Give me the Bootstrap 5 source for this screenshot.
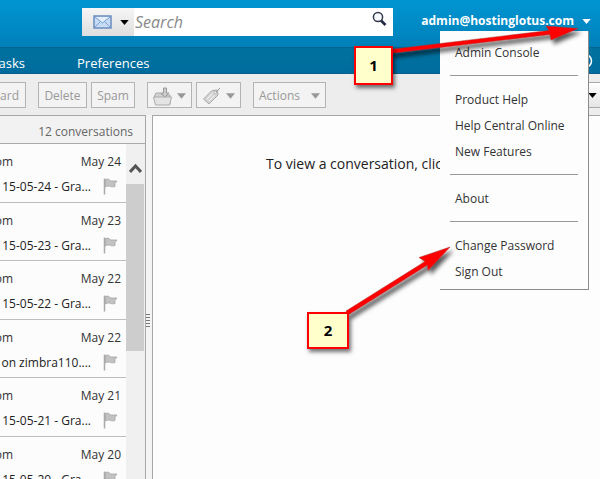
<!DOCTYPE html>
<html lang="en">
<head>
<meta charset="utf-8">
<meta name="viewport" content="width=device-width, initial-scale=1">
<title>Mail</title>
<link href="https://cdn.jsdelivr.net/npm/bootstrap@5.3.0/dist/css/bootstrap.min.css" rel="stylesheet">
<style>
body{font-family:"Open Sans","Noto Sans",sans-serif;font-size:12px;line-height:18px;color:#333;background:#ededed}
.topbar{height:47px;background:linear-gradient(#0095d3,#0080b8);padding:8px 8px 11px 82px}
.searchbox{width:311px;height:28px;background:#fff}
.search-type{width:52px;flex:none;padding:0 5px 0 11px;border:0;background:linear-gradient(#f6f6f6,#dedede)}
.search-text{border:0;border-radius:0;padding:0 1px 1px;font-size:16px;font-style:italic;background:#fff;color:#333;min-width:0}
.search-text::placeholder{color:#888}
.search-go{border:0;background:none;padding:0 6px 6px 4px}
.account{font-weight:700;font-size:12px;color:#fff;border:0;background:none;padding:0 1px 2px 0}
.tabs{height:27px;background:linear-gradient(#00729f,#006c9e);border-top:1px solid #006591;border-bottom:1px solid #0a5f88;padding-right:7px}
.tabs a{color:#fff;font-size:13px;text-decoration:none;line-height:30px}
.tab-cut{width:25px}
.tab-next{margin-left:52px}
.tools{height:41px;background:#ededed;padding-top:8px}
.tool{height:26px;border:1px solid #b4b4b4;border-radius:0;background:#f3f3f3;color:#999;font-size:12px;line-height:24px;padding:2px 0 0;white-space:nowrap;display:flex;align-items:center;justify-content:center}
.tool-cut{width:26px;border-left:0;overflow:hidden;justify-content:flex-end;padding-right:6px}
.w-delete{width:49px}
.w-spam{width:44px}
.w-icon{width:45px;gap:5px}
.w-actions{width:73px;gap:11px}
.gap-s{margin-left:4px}
.gap-l{margin-left:12px}
.tool-view{width:20px;height:26px;border:1px solid #aaa;border-right:0;background:linear-gradient(#fff,#e4e4e4);padding:0 3px 0 0;text-align:right;line-height:10px}
.pane-list{width:146px;border:1px solid #a6a6a6;border-width:1px 1px 0 0;background:#fcfcfc}
.list-top{height:28px;background:#f2f2f2;border-bottom:1px solid #aaa;color:#666;text-align:right;padding:7px 12px 0 0}
.mails{background:#fcfcfc}
.mail{height:59px;border-bottom:1px solid #bdbdbd;padding:9px 5px 0 0}
.mail:nth-child(even){height:58px}
.cut{overflow:hidden;display:flex;justify-content:flex-end;white-space:nowrap}
.cut-from{width:13px}
.cut-subject{width:91px;color:#222}
.mail-line{height:25px}
.scroller{width:19px;background:#f0f0f0}
.scroll-up{height:40px;border:0;background:none;padding:7px 0 0}
.thumb{height:167px;width:18px;background:#cdcdcd}
.grip-bar{width:6px;background:#f4f4f4}
.pane-read{border:1px solid #a6a6a6;border-width:1px 0 0 1px;background:#fdfdfd;padding:38px 0 0 113px;font-size:14px;line-height:20px;color:#222;white-space:nowrap;overflow:hidden;min-width:0}
.dropdown-menu.account-menu{--bs-dropdown-min-width:149px;width:149px;position:absolute;top:31px;right:11px;border:1px solid #8c8c8c;border-width:0 1px 1px 0;border-radius:0;background:#fdfdfd;padding:9px 0 4px;font-size:12px;z-index:10}
.account-menu .dropdown-item{padding:0 15px;line-height:26px;color:#333}
.account-menu .dropdown-divider{margin:9px 10px 11px;border-top:1px solid #999;opacity:1}
.pin{position:absolute;z-index:30;background:#ffc;border:2px solid #f00;box-shadow:2px 3px 4px rgba(0,0,0,.55);color:#000;font:700 15px/1 "Open Sans",sans-serif;display:flex;align-items:center;justify-content:center}
.pin-one{left:354px;top:46px;width:39px;height:39px}
.pin-two{left:307px;top:312px;width:42px;height:37px}
.arrows{position:absolute;left:0;top:0;z-index:20;pointer-events:none;overflow:visible}
</style>
<script src="https://cdn.jsdelivr.net/npm/bootstrap@5.3.0/dist/js/bootstrap.bundle.min.js"></script>
</head>
<body class="vh-100 overflow-hidden position-relative d-flex flex-column">
<svg width="0" height="0" class="position-absolute" aria-hidden="true">
  <symbol id="flag" viewBox="0 0 18 18"><path d="M1.500 .5v16" stroke="#aaa" stroke-width="1.500"/><path d="M2.500 1.500c2-1 4 0 5 1.500h6.500l-2 2.500v3c-4 1-4-.5-6-.5s-2.500.5-3.500 1z" fill="#c2c2c2" stroke="#a4a4a4" stroke-width=".8"/></symbol>
  <symbol id="caret" viewBox="0 0 10 6"><path d="M0 0h10L5 6z" fill="currentColor"/></symbol>
</svg>

<header class="topbar d-flex justify-content-between flex-shrink-0">
  <form class="searchbox d-flex" role="search">
    <button type="button" class="search-type d-flex align-items-center justify-content-between" aria-label="Search type">
      <svg width="19" height="14" viewBox="0 0 19 14"><rect x="1" y="1" width="17" height="12" fill="#c5dcf4" stroke="#6a8cc0" stroke-width="1.5"/><path d="M2 2l7.500 6L17 2M2 12l5.500-5.500M17 12l-5.500-5.500" fill="none" stroke="#7d9fcd"/><path d="M3 2h13l-6.500 5z" fill="#e2effb"/></svg>
      <svg width="9" height="5" color="#000"><use href="#caret"/></svg>
    </button>
    <input class="search-text form-control" type="text" placeholder="Search" aria-label="Search">
    <button type="button" class="search-go" aria-label="Find"><svg width="15" height="17" viewBox="0 0 15 17"><circle cx="6" cy="6" r="4.600" fill="#f7fbff" stroke="#333a4c" stroke-width="1.500"/><path d="M9 9.500l4.500 4.500" stroke="#222b44" stroke-width="2.600"/></svg></button>
  </form>
  <button type="button" class="account d-flex align-items-center gap-2" aria-expanded="true">admin@hostinglotus.com <svg width="9" height="5"><use href="#caret"/></svg></button>
</header>

<nav class="tabs d-flex flex-shrink-0">
  <a href="#" class="tab-cut cut">asks</a>
  <a href="#" class="tab-next">Preferences</a>
  <svg class="ms-auto align-self-center" width="14" height="16" viewBox="0 0 14 16"><circle cx="6" cy="8" r="6.500" fill="none" stroke="#fff" stroke-width="1.500"/></svg>
</nav>

<div class="tools d-flex flex-shrink-0">
  <button type="button" class="tool tool-cut">ard</button>
  <button type="button" class="tool w-delete gap-l">Delete</button>
  <button type="button" class="tool w-spam gap-s">Spam</button>
  <button type="button" class="tool w-icon gap-l" aria-label="Move">
    <svg width="19" height="19" viewBox="0 0 19 19"><path d="M1.500 9L3 6h5l1 2h8v9.500H3z" fill="#d2d2d2" stroke="#aaa"/><path d="M10.500 1h3v5h2.500l-4 4-4-4h2.500z" fill="#ccc" stroke="#999"/><path d="M.5 10h18l-2 8h-14z" fill="#e4e4e4" stroke="#aaa"/></svg>
    <svg width="9" height="6"><use href="#caret"/></svg></button>
  <button type="button" class="tool w-icon gap-s" aria-label="Tag">
    <svg width="19" height="19" viewBox="0 0 19 19"><path d="M1.500 12l8.500-8.500 5.500-.5.500 5L7 17z" fill="#d4d4d4" stroke="#aaa"/><path d="M5 12l5.500-5.500M7 14l5.500-5.500" stroke="#f4f4f4"/><circle cx="13.500" cy="5.500" r="1.200" fill="#fff" stroke="#999" stroke-width=".7"/><path d="M14 5l4-4" stroke="#999"/></svg>
    <svg width="9" height="6"><use href="#caret"/></svg></button>
  <button type="button" class="tool w-actions gap-l">Actions <svg width="9" height="6"><use href="#caret"/></svg></button>
  <button type="button" class="tool-view ms-auto" aria-label="View"><svg width="9" height="5" color="#000"><use href="#caret"/></svg></button>
</div>

<main class="d-flex flex-grow-1 overflow-hidden">
  <section class="pane-list d-flex flex-column flex-shrink-0">
    <div class="list-top flex-shrink-0">12 conversations</div>
    <div class="d-flex flex-grow-1 overflow-hidden">
      <div class="mails flex-grow-1">
        <article class="mail"><div class="mail-line d-flex justify-content-between"><span class="cut cut-from">om</span><span>May 24</span></div><div class="d-flex justify-content-between"><span class="cut cut-subject">15-05-24 - Gra...</span><svg width="18" height="18"><use href="#flag"/></svg></div></article>
        <article class="mail"><div class="mail-line d-flex justify-content-between"><span class="cut cut-from">om</span><span>May 23</span></div><div class="d-flex justify-content-between"><span class="cut cut-subject">15-05-23 - Gra...</span><svg width="18" height="18"><use href="#flag"/></svg></div></article>
        <article class="mail"><div class="mail-line d-flex justify-content-between"><span class="cut cut-from">om</span><span>May 22</span></div><div class="d-flex justify-content-between"><span class="cut cut-subject">15-05-22 - Gra...</span><svg width="18" height="18"><use href="#flag"/></svg></div></article>
        <article class="mail"><div class="mail-line d-flex justify-content-between"><span class="cut cut-from">om</span><span>May 22</span></div><div class="d-flex justify-content-between"><span class="cut cut-subject">on zimbra110....</span><svg width="18" height="18"><use href="#flag"/></svg></div></article>
        <article class="mail"><div class="mail-line d-flex justify-content-between"><span class="cut cut-from">om</span><span>May 21</span></div><div class="d-flex justify-content-between"><span class="cut cut-subject">15-05-21 - Gra...</span><svg width="18" height="18"><use href="#flag"/></svg></div></article>
        <article class="mail"><div class="mail-line d-flex justify-content-between"><span class="cut cut-from">om</span><span>May 20</span></div><div class="d-flex justify-content-between"><span class="cut cut-subject">15-05-20 - Gra...</span><svg width="18" height="18"><use href="#flag"/></svg></div></article>
      </div>
      <div class="scroller d-flex flex-column flex-shrink-0">
        <button type="button" class="scroll-up flex-shrink-0" aria-label="Scroll up"><svg width="13" height="11" viewBox="0 0 13 11"><path d="M1 9l5.500-6L12 9" fill="none" stroke="#555" stroke-width="3"/></svg></button>
        <div class="thumb flex-shrink-0"></div>
      </div>
    </div>
  </section>
  <div class="grip-bar d-flex align-items-center flex-shrink-0 pt-5"><svg width="5" height="17" viewBox="0 0 5 17"><path d="M0 1.500h4M0 4.500h4M0 7.500h4M0 10.500h4M0 13.500h4" stroke="#777"/></svg></div>
  <section class="pane-read flex-grow-1">To view a conversation, click on it.</section>
</main>

<div class="dropdown-menu account-menu show">
  <a class="dropdown-item" href="#">Admin Console</a>
  <hr class="dropdown-divider">
  <a class="dropdown-item" href="#">Product Help</a>
  <a class="dropdown-item" href="#">Help Central Online</a>
  <a class="dropdown-item" href="#">New Features</a>
  <hr class="dropdown-divider">
  <a class="dropdown-item" href="#">About</a>
  <hr class="dropdown-divider">
  <a class="dropdown-item" href="#">Change Password</a>
  <a class="dropdown-item" href="#">Sign Out</a>
</div>

<svg class="arrows" width="600" height="479" viewBox="0 0 600 479" aria-hidden="true">
  <defs><filter id="drop" x="-10%" y="-20%" width="130%" height="160%"><feDropShadow dx="3" dy="4" stdDeviation="2" flood-color="#000" flood-opacity=".65"/></filter></defs>
  <g filter="url(#drop)" fill="#f00" stroke="#a33" stroke-width=".5">
    <path d="M390 49.500L549 30.500 546 26 578 28.500 551 40 550 34.500 390 53.500z"/>
    <path d="M346 311L425 261.500 419 257.500 450 247 428 270.500 427.500 265 348 315z"/>
  </g>
</svg>
<div class="pin pin-one">1</div>
<div class="pin pin-two">2</div>
</body>
</html>
